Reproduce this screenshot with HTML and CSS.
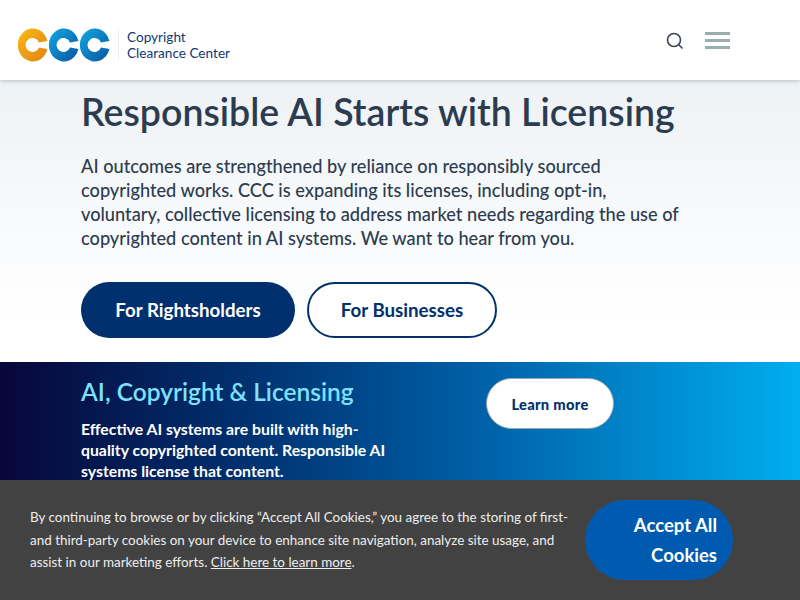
FILE: index.html
```html
<!DOCTYPE html>
<html lang="en">
<head>
<meta charset="utf-8">
<title>Copyright Clearance Center</title>
<link rel="stylesheet" href="styles.css">
</head>
<body>
<header class="site-header">
  <a class="logo" href="#">
    <svg class="logo-mark" width="94" height="34" viewBox="0 0 94 34" aria-hidden="true">
      <defs>
        <linearGradient id="gy" x1="0" y1="0" x2="1" y2="1"><stop offset="0" stop-color="#fdb913"/><stop offset="1" stop-color="#dd8412"/></linearGradient>
        <linearGradient id="gb" x1="0" y1="0" x2="1" y2="1"><stop offset="0" stop-color="#10a8e2"/><stop offset="1" stop-color="#0a56a0"/></linearGradient>
      </defs>
      <path fill="url(#gy)" transform="translate(15 17)" d="M14.4 -4A15 16.5 0 1 0 14.4 4L6 2.5A7 7 0 1 1 6 -2.5Z"/>
      <path fill="url(#gb)" transform="translate(46 17)" d="M14.4 -4A15 16.5 0 1 0 14.4 4L6 2.5A7 7 0 1 1 6 -2.5Z"/>
      <path fill="url(#gb)" transform="translate(77 17)" d="M14.4 -4A15 16.5 0 1 0 14.4 4L6 2.5A7 7 0 1 1 6 -2.5Z"/>
    </svg>
    <span class="logo-divider"></span>
    <span class="logo-text">Copyright<br>Clearance Center</span>
  </a>
  <div class="header-tools">
    <svg class="search-icon" width="18" height="18" viewBox="0 0 18 18" aria-hidden="true">
      <circle cx="8" cy="8" r="6.5"/><path d="M12.8 12.8L16.5 16.5"/>
    </svg>
    <span class="menu-icon"><i></i><i></i><i></i></span>
  </div>
</header>
<section class="hero">
  <h1>Responsible AI Starts with Licensing</h1>
  <p>AI outcomes are strengthened by reliance on responsibly sourced copyrighted works. CCC is expanding its licenses, including opt-in, voluntary, collective licensing to address market needs regarding the use of copyrighted content in AI systems. We want to hear from you.</p>
  <div class="hero-actions">
    <a class="btn btn-solid" href="#">For Rightsholders</a>
    <a class="btn btn-outline" href="#">For Businesses</a>
  </div>
</section>
<section class="banner">
  <div class="banner-copy">
    <h2>AI, Copyright &amp; Licensing</h2>
    <p>Effective AI systems are built with high-quality copyrighted content. Responsible AI systems license that content.</p>
  </div>
  <a class="btn-learn" href="#">Learn more</a>
</section>
<aside class="cookie">
  <p>By continuing to browse or by clicking “Accept All Cookies,” you agree to the storing of first-and third-party cookies on your device to enhance site navigation, analyze site usage, and assist in our marketing efforts. <a href="#">Click here to learn more</a>.</p>
  <button class="cookie-btn">Accept All Cookies</button>
</aside>
</body>
</html>
```
FILE: styles.css
```css
* { box-sizing: border-box; }
html, body { margin: 0; height: 600px; overflow: hidden; }
body { font-family: "Lato", "Liberation Sans", sans-serif; background: #fff; position: relative; }
a { text-decoration: none; color: inherit; }

.site-header { height: 80px; background: #fff; display: flex; align-items: center; justify-content: space-between; padding: 0 70px 0 18px; box-shadow: 0 1px 4px rgba(60,80,100,.3); position: relative; z-index: 2; }
.logo { display: flex; align-items: center; margin-top: 10px; }
.logo-mark { display: block; }
.logo-divider { width: 1px; height: 32px; background: #eef0f2; margin: 0 8px 0 6px; }
.logo-text { font-size: 13.6px; line-height: 16px; color: #0f3a74; }
.header-tools { display: flex; align-items: center; gap: 21px; }
.search-icon { display: block; margin-top: 2px; }
.search-icon circle, .search-icon path { fill: none; stroke: #3a4654; stroke-width: 1.6; }
.menu-icon { display: flex; flex-direction: column; gap: 4px; width: 25px; }
.menu-icon i { display: block; height: 3px; background: #9aaeae; }

.hero { height: 282px; padding: 10px 0 0 81px; background: linear-gradient(#eef2f5, #fff 85%); color: #2c3c50; }
.hero h1 { margin: 0; font-size: 37.5px; line-height: 44px; font-weight: 600; }
.hero p { margin: 20px 0 0; width: 600px; font-size: 18.2px; line-height: 24px; font-weight: 500; }
.hero-actions { display: flex; gap: 12px; margin-top: 32px; }
.btn { height: 56px; border-radius: 28px; display: flex; align-items: center; justify-content: center; font-size: 18.7px; font-weight: 700; }
.btn-solid { width: 214px; background: #00306e; color: #fff; }
.btn-outline { width: 190px; background: #fff; color: #00306e; border: 2px solid #00306e; }

.banner { height: 238px; padding: 14px 0 0 81px; display: flex; align-items: flex-start; background: linear-gradient(90deg, #08063a 0, #00306e 30%, #0060a8 60%, #00aeef 100%); color: #fff; }
.banner-copy { width: 310px; }
.banner h2 { margin: 0; font-size: 24.5px; line-height: 32px; font-weight: 600; color: #7fe0fb; }
.banner p { margin: 10px 0 0; font-size: 15.8px; line-height: 21px; font-weight: 700; }
.btn-learn { margin: 2px 0 0 95px; width: 128px; height: 51px; border-radius: 26px; background: #fff; border: 1px solid #9aa5ad; color: #00306e; font-size: 14.7px; font-weight: 900; display: flex; align-items: center; justify-content: center; letter-spacing: .3px; }

.cookie { position: absolute; left: 0; right: 0; bottom: 0; height: 120px; background: #424242; display: flex; align-items: center; padding: 0 67px 0 30px; gap: 15px; color: #eee; }
.cookie p { margin: 0; flex: 1; font-size: 13.45px; line-height: 22.5px; font-weight: 400; }
.cookie a { text-decoration: underline; }
.cookie-btn { width: 148px; height: 80px; border: 0; border-radius: 40px; background: #005bb0; color: #fff; font: 700 18.5px/30px "Lato", sans-serif; text-align: right; padding: 0 16px; }
```
